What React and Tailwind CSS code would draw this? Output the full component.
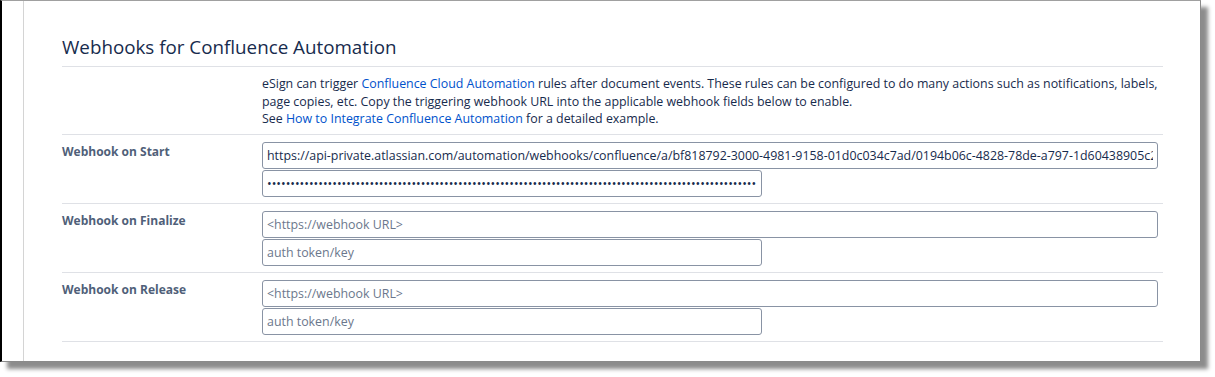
import React from 'react';

const URL_VALUE =
  'https://api-private.atlassian.com/automation/webhooks/confluence/a/bf818792-3000-4981-9158-01d0c034c7ad/0194b06c-4828-78de-a797-1d60438905c2';

function WebhookRow({ label, url, token }) {
  return (
    <div className="flex border-b border-[#dfe1e6] pt-[7px] pb-[6px]">
      <div className="w-[200px] shrink-0 pt-[1px] text-[12px] font-bold text-[#505f79]">{label}</div>
      <div className="flex flex-1 flex-col gap-[1px] pr-[5px]">
        <input
          readOnly
          value={url}
          placeholder="<https://webhook URL>"
          className="h-[27px] w-full rounded-[3px] border border-[#8993a4] px-[4px] text-[12.4px] text-[#172b4d] placeholder:text-[#6b778c] focus:outline-none"
        />
        <input
          readOnly
          value={token}
          placeholder="auth token/key"
          className="h-[27px] w-[500px] rounded-[3px] border border-[#8993a4] px-[4px] text-[12.4px] text-[#172b4d] placeholder:text-[#6b778c] focus:outline-none"
        />
      </div>
    </div>
  );
}

export default function App() {
  return (
    <div className="h-[377px] w-[1215px] bg-white font-['Open_Sans',sans-serif]">
      <div className="flex h-[362px] w-[1201px] border-t border-r border-b border-l-2 border-t-[#a0a0a0] border-r-[#8a8a8a] border-b-[#8a8a8a] border-l-black bg-white shadow-[7px_7px_4px_rgba(0,0,0,0.45)]">
        <div className="w-[22px] shrink-0 border-r border-[#d4d4d4]" />
        <div className="flex-1 pl-[38px] pr-[37px]">
          <h2 className="mt-[34px] border-b border-[#dfe1e6] pb-[7px] text-[18.8px] leading-[24px] text-[#172b4d]">
            Webhooks for Confluence Automation
          </h2>
          <div className="flex border-b border-[#dfe1e6] pt-[8px] pb-[6px]">
            <div className="w-[200px] shrink-0" />
            <p className="text-[12.4px] leading-[17.5px] text-[#172b4d]">
              eSign can trigger <a className="text-[#0052cc]">Confluence Cloud Automation</a> rules after document events. These rules can be configured to do many actions such as notifications, labels, page copies, etc. Copy the triggering webhook URL into the applicable webhook fields below to enable.
              <br />
              See <a className="text-[#0052cc]">How to Integrate Confluence Automation</a> for a detailed example.
            </p>
          </div>
          <WebhookRow label="Webhook on Start" url={URL_VALUE} token={'•'.repeat(105)} />
          <WebhookRow label="Webhook on Finalize" url="" token="" />
          <WebhookRow label="Webhook on Release" url="" token="" />
        </div>
      </div>
    </div>
  );
}
